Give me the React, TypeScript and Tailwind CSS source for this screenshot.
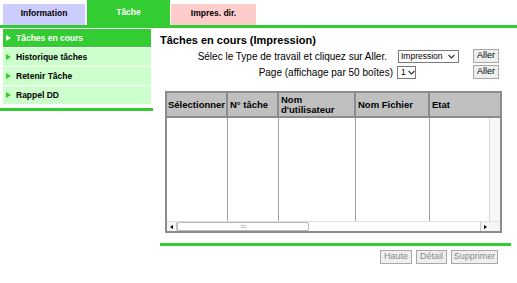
const menu = ["Tâches en cours", "Historique tâches", "Retenir Tâche", "Rappel DD"]

function Arrow({ active }: { active: boolean }) {
    return (
        <span
            className={
                "inline-block w-0 h-0 border-y-[3px] border-y-transparent border-l-[5px] " +
                (active ? "border-l-white" : "border-l-[#33cc33]")
            }
        />
    )
}

function Chevron() {
    return (
        <svg width="7" height="5" viewBox="0 0 7 5" className="shrink-0">
            <path d="M0.5 1 L3.5 4 L6.5 1" fill="none" stroke="#333" strokeWidth="1.1" />
        </svg>
    )
}

function SmallButton({ label, width }: { label: string; width: string }) {
    return (
        <div
            className={
                "h-[14px] flex items-center justify-center border border-[#a8a8a8] bg-[#efefef] text-[9px] text-[#8a8a8a] " +
                width
            }
        >
            {label}
        </div>
    )
}

export default function App() {
    return (
        <div className="w-[517px] h-[283px] bg-white overflow-hidden font-['Liberation_Sans',Arial,sans-serif] text-black">
            {/* Tabs */}
            <div className="flex items-end h-[25px] pl-[3px] text-[8.5px] font-bold">
                <div className="w-[82px] h-[21px] bg-[#ccccff] flex items-center justify-center pb-[3px]">
                    Information
                </div>
                <div className="ml-[2px] w-[83px] h-[25px] bg-[#33cc33] text-white flex items-center justify-center pb-[1px]">
                    Tâche
                </div>
                <div className="ml-[1px] w-[85px] h-[21px] bg-[#ffcccc] flex items-center justify-center pb-[3px]">
                    Impres. dir.
                </div>
            </div>
            <div className="h-[3px] bg-[#33cc33]" />

            <div className="flex pt-[1px]">
                {/* Left menu */}
                <div className="w-[153px] shrink-0">
                    <div className="ml-[3px] w-[148px] flex flex-col gap-[1px] text-[8.5px] font-bold">
                        {menu.map((item, i) => (
                            <div
                                key={item}
                                className={
                                    "h-[18px] flex items-center pl-[3px] gap-[5px] " +
                                    (i === 0 ? "bg-[#33cc33] text-white" : "bg-[#ccffcc] text-black")
                                }
                            >
                                <Arrow active={i === 0} />
                                <span>{item}</span>
                            </div>
                        ))}
                    </div>
                    <div className="mt-[4px] h-[3px] bg-[#33cc33]" />
                </div>

                {/* Main */}
                <div className="ml-[7px] w-[351px] flex flex-col">
                    <div className="pt-[5px] h-[20px] text-[11px] font-bold leading-[13px]">
                        Tâches en cours (Impression)
                    </div>

                    <div className="flex items-center justify-end h-[14px] pr-[12px] text-[10px]">
                        <span className="mr-[11px]">Sélec le Type de travail et cliquez sur Aller.</span>
                        <div className="w-[75px]">
                            <div className="w-[61px] h-[13px] border border-[#7a7a7a] flex items-center justify-between pl-[2px] pr-[3px] text-[8.5px]">
                                <span>Impression</span>
                                <Chevron />
                            </div>
                        </div>
                        <SmallButton label="Aller" width="w-[26px] !text-black" />
                    </div>

                    <div className="mt-[2px] flex items-center justify-end h-[14px] pr-[12px] text-[10px]">
                        <span className="mr-[5px]">Page (affichage par 50 boîtes)</span>
                        <div className="w-[75px]">
                            <div className="-ml-[1px] w-[19px] h-[13px] border border-[#7a7a7a] flex items-center gap-[2px] pl-[3px] text-[8.5px]">
                                <span>1</span>
                                <Chevron />
                            </div>
                        </div>
                        <SmallButton label="Aller" width="w-[26px] !text-black" />
                    </div>

                    {/* Table */}
                    <div className="mt-[12px] ml-[5px] w-[337px] h-[142px] border-2 border-[#8c8c8c] flex flex-col">
                        <div className="h-[25px] shrink-0 flex bg-[#c0c0c0] border-b-2 border-[#8c8c8c] text-[9.5px] font-bold leading-[10px]">
                            <div className="w-[61px] border-r-2 border-[#8c8c8c] flex items-center pl-[1px]">Sélectionner</div>
                            <div className="w-[51px] border-r-2 border-[#8c8c8c] flex items-center pl-[2px]">N° tâche</div>
                            <div className="w-[77px] border-r-2 border-[#8c8c8c] flex items-center pl-[2px]">
                                Nom
                                <br />
                                d'utilisateur
                            </div>
                            <div className="w-[74px] border-r-2 border-[#8c8c8c] flex items-center pl-[2px]">Nom Fichier</div>
                            <div className="flex-1 flex items-center pl-[2px]">Etat</div>
                        </div>
                        <div className="flex-1 flex">
                            <div className="w-[61px] border-r border-[#a0a0a0]" />
                            <div className="w-[51px] border-r border-[#a0a0a0]" />
                            <div className="w-[77px] border-r border-[#a0a0a0]" />
                            <div className="w-[74px] border-r border-[#a0a0a0]" />
                            <div className="w-[60px] border-r border-[#d8d8d8]" />
                            <div className="flex-1 bg-[#f7f7f7]" />
                        </div>
                        <div className="h-[10px] shrink-0 flex bg-[#f4f4f4] border-t border-[#e0e0e0]">
                            <div className="w-[10px] flex items-center justify-center border-r border-[#c8c8c8]">
                                <span className="w-0 h-0 border-y-[2px] border-y-transparent border-r-[3px] border-r-black" />
                            </div>
                            <div className="w-[132px] bg-white border border-[#b8b8b8] rounded-[2px] flex items-center justify-center">
                                <span className="w-[5px] h-[3px] border-y border-[#c0c0c0]" />
                            </div>
                            <div className="flex-1 bg-white" />
                            <div className="w-[10px] flex items-center justify-center border-l border-[#c8c8c8]">
                                <span className="w-0 h-0 border-y-[2px] border-y-transparent border-l-[3px] border-l-black" />
                            </div>
                            <div className="w-[10px] bg-[#f4f4f4]" />
                        </div>
                    </div>

                    <div className="mt-[10px] h-[3px] bg-[#33cc33]" />

                    <div className="mt-[4px] flex justify-end gap-[4px] pr-[13px]">
                        <SmallButton label="Haute" width="w-[32px]" />
                        <SmallButton label="Détail" width="w-[31px]" />
                        <SmallButton label="Supprimer" width="w-[47px]" />
                    </div>
                </div>
            </div>
        </div>
    )
}
